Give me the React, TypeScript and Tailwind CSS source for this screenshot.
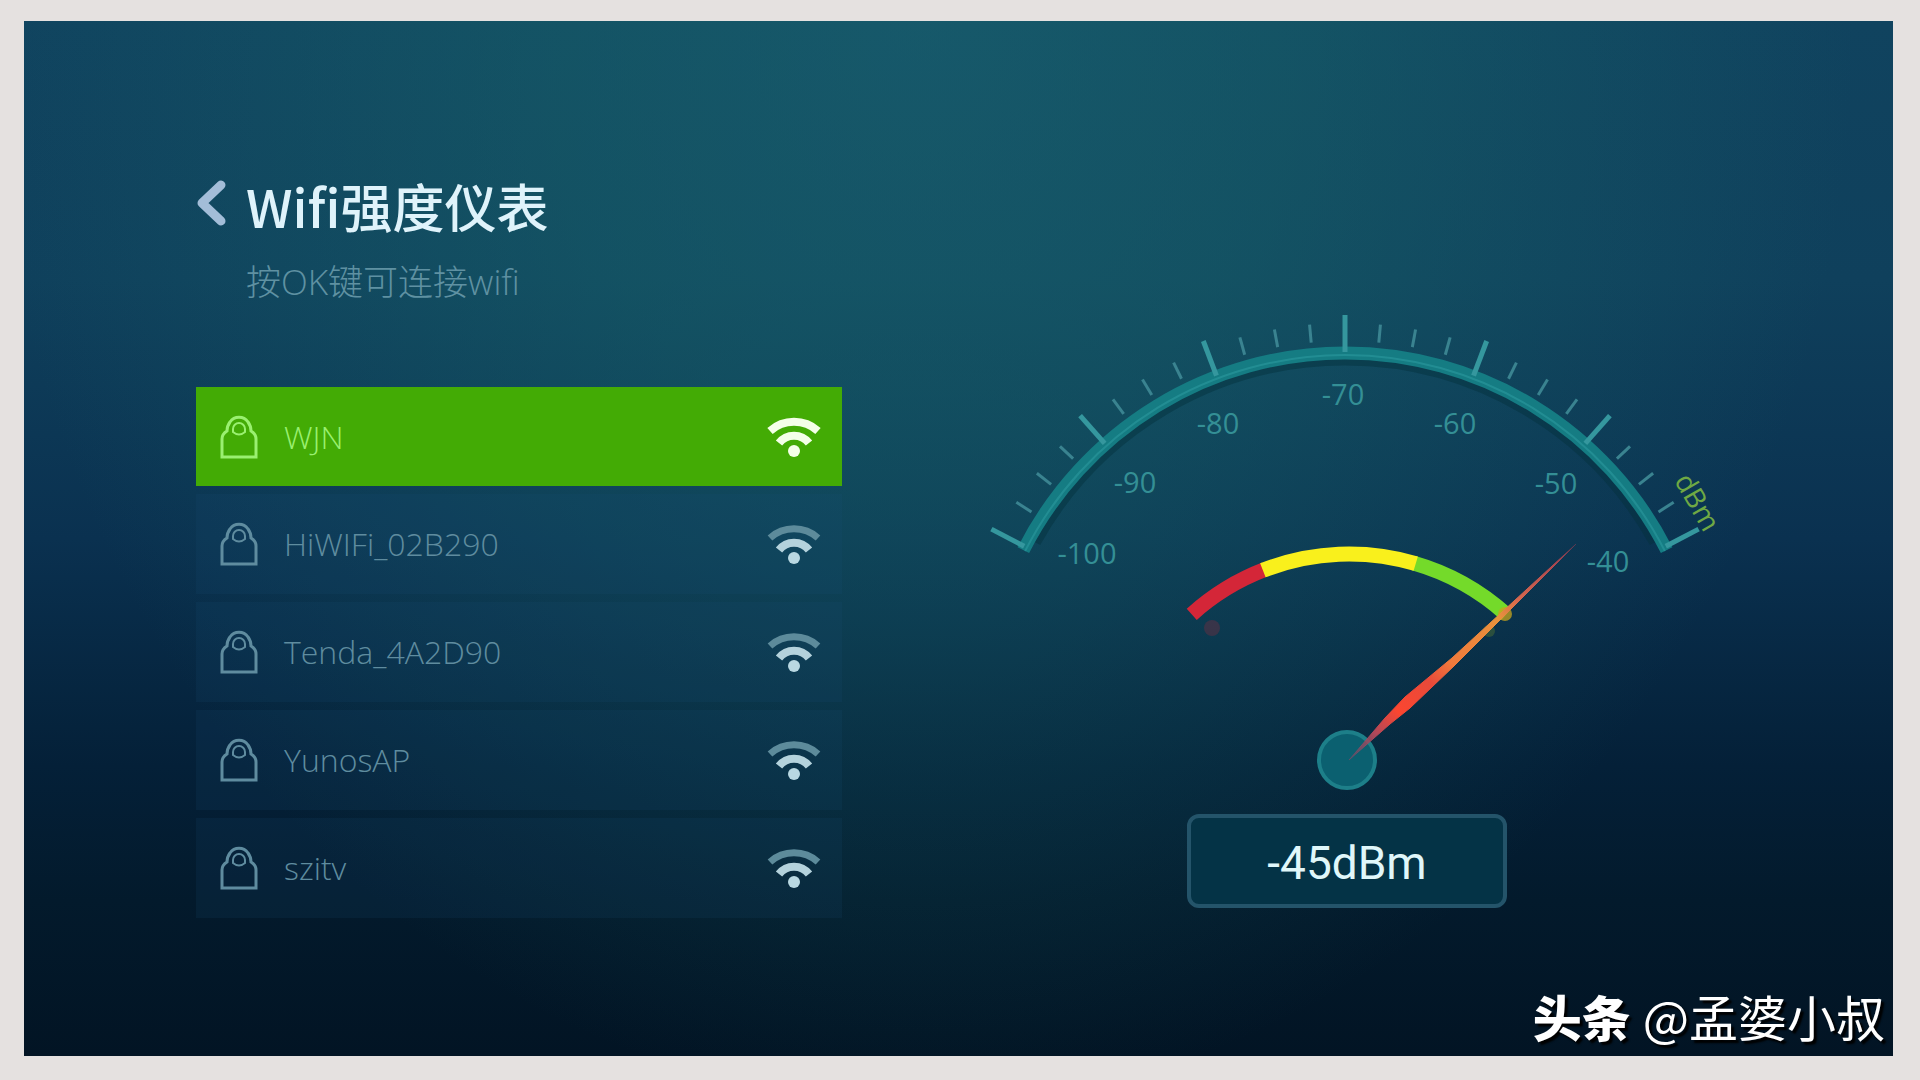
type Network = { name: string; strong?: boolean };

const networks: Network[] = [
  { name: "WJN", strong: true },
  { name: "HiWIFi_02B290" },
  { name: "Tenda_4A2D90" },
  { name: "YunosAP" },
  { name: "szitv" },
];

function LockIcon() {
  return (
    <svg width="38" height="46" viewBox="0 0 38 46" fill="none" stroke="currentColor" strokeWidth="3" aria-hidden="true">
      <path d="M2 43V25q0-5 5-8q0-5 3-9a11 11 0 0 1 18 0q3 4 3 9q5 3 5 8V43Z" />
      <path d="M13 18v-3a6 6 0 0 1 12 0v3q-6 5-12 0Z" strokeWidth="2" />
    </svg>
  );
}

function WifiIcon({ strong }: { strong?: boolean }) {
  return (
    <svg width="54" height="40" viewBox="0 0 54 40" fill="none" strokeWidth="8" aria-hidden="true">
      <path d="M3 14A36 36 0 0 1 51 14" stroke={strong ? "#f4ffe8" : "#5d8b9b"} strokeWidth={strong ? 8 : 7} />
      <path d="M12 26A19 19 0 0 1 42 26" stroke={strong ? "#f4ffe8" : "#b4d2dc"} />
      <circle cx="27" cy="34" r="6" fill={strong ? "#f4ffe8" : "#b9d8e2"} />
    </svg>
  );
}

const CX = 375;
const CY = 414;

function polar(cx: number, cy: number, r: number, deg: number) {
  const a = (deg * Math.PI) / 180;
  return [cx + r * Math.sin(a), cy - r * Math.cos(a)];
}

function arc(cx: number, cy: number, r: number, from: number, to: number) {
  const [x1, y1] = polar(cx, cy, r, from);
  const [x2, y2] = polar(cx, cy, r, to);
  return `M${x1} ${y1}A${r} ${r} 0 0 1 ${x2} ${y2}`;
}

const scale = [
  { text: "-100", x: 117, y: 264 },
  { text: "-90", x: 165, y: 193 },
  { text: "-80", x: 248, y: 134 },
  { text: "-70", x: 373, y: 105 },
  { text: "-60", x: 485, y: 134 },
  { text: "-50", x: 586, y: 194 },
  { text: "-40", x: 638, y: 272 },
];

function Gauge() {
  const ticks = Array.from({ length: 25 }, (_, i) => i);
  return (
    <svg viewBox="0 0 770 495" className="w-full" role="img" aria-label="-45dBm">
      <defs>
        <linearGradient id="needle" gradientUnits="userSpaceOnUse" x1="379" y1="460" x2="606" y2="244">
          <stop offset="0" stopColor="#7a4a68" stopOpacity="0.5" />
          <stop offset="0.12" stopColor="#b0485a" />
          <stop offset="0.22" stopColor="#fb4630" />
          <stop offset="0.36" stopColor="#e84a3a" />
          <stop offset="0.45" stopColor="#f07a3c" />
          <stop offset="0.66" stopColor="#e8923c" />
          <stop offset="0.74" stopColor="#d8684e" />
          <stop offset="0.92" stopColor="#a84650" />
          <stop offset="1" stopColor="#7a3a50" stopOpacity="0.4" />
        </linearGradient>
      </defs>

      <path d={arc(CX, CY, 352, -61, 61)} fill="none" stroke="#04303c" strokeOpacity="0.45" strokeWidth="7" />
      <path d={arc(CX, CY, 361, -63, 63)} fill="none" stroke="#157c83" strokeWidth="13" />
      <path d={arc(CX, CY, 359, -63, 63)} fill="none" stroke="#2b9a9f" strokeOpacity="0.6" strokeWidth="2" />
      {ticks.map((i) => {
        const deg = (i - 12) * 5.2;
        const major = i % 4 === 0;
        const [x1, y1] = polar(CX, CY, major ? 362 : 373, deg);
        const [x2, y2] = polar(CX, CY, major ? 399 : 391, deg);
        return (
          <line
            key={i}
            x1={x1}
            y1={y1}
            x2={x2}
            y2={y2}
            stroke={major ? "#35979e" : "#3a8390"}
            strokeWidth={major ? 5 : 3}
          />
        );
      })}

      <g fill="#348f95" fontSize="29" textAnchor="middle" fontFamily="'Open Sans', sans-serif">
        {scale.map((s) => (
          <text key={s.text} x={s.x} y={s.y}>
            {s.text}
          </text>
        ))}
      </g>
      <text
        fill="#6fa844"
        fontSize="28"
        textAnchor="middle"
        fontFamily="'Open Sans', sans-serif"
        transform="translate(719 207) rotate(60)"
      >
        dBm
      </text>

      <path d={arc(379, 489, 235, -42, -21)} fill="none" stroke="#d42638" strokeWidth="15" />
      <path d={arc(379, 489, 235, 16, 42)} fill="none" stroke="#74da2a" strokeWidth="15" />
      <path d={arc(379, 489, 235, -21.5, 16.5)} fill="none" stroke="#f9f01c" strokeWidth="15" />
      <circle cx="242" cy="328" r="8" fill="#8c2c3c" fillOpacity="0.35" />
      <circle cx="519" cy="331" r="6" fill="#5c7c2c" fillOpacity="0.4" />

      <circle cx="377" cy="460" r="28" fill="#0b6070" stroke="#1d7f89" strokeWidth="4" />
      <circle cx="535" cy="314" r="7" fill="#c8a41c" fillOpacity="0.75" />
      <path d="M379 460L415 418L435 397L482 358L606 244L484 366L440 408L420 424Z" fill="url(#needle)" stroke="url(#needle)" strokeWidth="1" />
    </svg>
  );
}

export default function App() {
  return (
    <div className="flex min-h-screen bg-[#e5e1e0] pt-[21px] pr-[27px] pb-6 pl-6 font-['Open_Sans','Noto_Sans_CJK_SC',sans-serif]">
      <div className="flex grow flex-col bg-[radial-gradient(ellipse_50%_105%_at_48%_0%,rgba(30,115,120,0.45)_0%,rgba(26,110,110,0.38)_40%,rgba(10,80,80,0)_100%),linear-gradient(180deg,#10435f_0%,#0f405c_25%,#0a3150_50%,#042038_72%,#031a2c_85%,#021424_100%)]">
        <main className="grid grow grid-cols-[646fr_770fr] gap-x-[128px] pr-[153px] pl-[172px]">
          <section className="pt-[147px]">
            <header className="flex gap-2.5">
              <button type="button" aria-label="返回" className="flex h-[72px] w-10 items-center text-[#a3bdd8]">
                <svg width="32" height="48" viewBox="0 0 32 48" fill="none" stroke="currentColor" strokeWidth="9" aria-hidden="true">
                  <path d="M25 5L6 23L25 41" strokeLinecap="round" strokeLinejoin="round" />
                </svg>
              </button>
              <div>
                <h1 className="font-['Noto_Sans_CJK_SC',sans-serif] text-[52px] leading-[76px] font-medium text-[#dff3fb]">Wifi强度仪表</h1>
                <p className="pt-2.5 text-[35px] leading-[56px] font-light text-[#5f91a2]">按OK键可连接wifi</p>
              </div>
            </header>
            <ul className="mt-[77px] flex flex-col gap-2">
              {networks.map((n) => (
                <li key={n.name}>
                  <button
                    type="button"
                    className={
                      n.strong
                        ? "flex h-[99px] w-full items-center bg-[#43ab05] pr-[21px] pl-6 text-[#9af070]"
                        : "flex h-[100px] w-full items-center bg-[#1c5078]/15 pr-[21px] pl-6 text-[#5f8c9f]"
                    }
                  >
                    <LockIcon />
                    <span className="grow pl-[26px] text-left text-[32px] leading-10 font-light">{n.name}</span>
                    <WifiIcon strong={n.strong} />
                  </button>
                </li>
              ))}
            </ul>
          </section>
          <section className="flex flex-col items-center pt-[279px]">
            <Gauge />
            <output className="mt-[19px] mr-4 flex h-[94px] w-[320px] items-center justify-center rounded-xl border-4 border-[#24546a] bg-[#043346] pt-1 font-['Roboto',sans-serif] text-[46px] text-[#e0f7fa]">
              -45dBm
            </output>
          </section>
        </main>
        <footer className="flex h-20 items-center justify-end gap-3 pr-2 font-['Noto_Sans_CJK_SC',sans-serif] text-[49px] leading-[72px] text-white [text-shadow:3px_3px_2px_#000]">
          <span className="font-black">头条</span>
          <span>@孟婆小叔</span>
        </footer>
      </div>
    </div>
  );
}
